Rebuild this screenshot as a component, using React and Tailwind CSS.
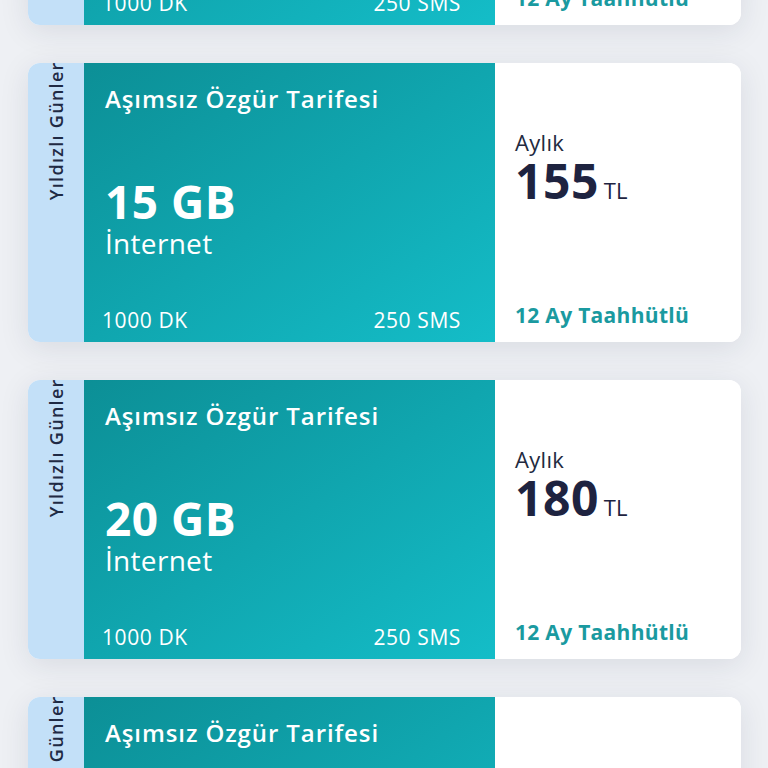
import React from "react";

const plans = [
  { gb: 10, price: 130 },
  { gb: 15, price: 155 },
  { gb: 20, price: 180 },
  { gb: 25, price: 205 },
];

const PlanCard = ({ gb, price }) => {
  return (
    <div className="flex h-[279px] rounded-[12px] overflow-hidden bg-white shadow-[0_6px_30px_rgba(30,40,70,0.10)]">
      {/* side tab */}
      <div className="w-[56px] shrink-0 bg-[#c3e0f8] flex flex-col items-center justify-end pb-[142px] overflow-hidden">
        <span className="[writing-mode:vertical-rl] rotate-180 whitespace-nowrap text-[18px] font-semibold tracking-[1.3px] text-[#1f2a44]">
          Yıldızlı Günleri
        </span>
      </div>

      {/* teal block */}
      <div className="w-[411px] shrink-0 flex flex-col bg-gradient-to-br from-[#0c8f96] to-[#14bdc8] text-white">
        <div className="pl-[21px] pt-[21px] text-[24px] leading-[30px] font-semibold tracking-[0.9px]">
          Aşımsız Özgür Tarifesi
        </div>
        <div className="pl-[21px] mt-[63px] text-[46px] leading-[48px] font-bold tracking-[0.5px]">
          {gb} GB
        </div>
        <div className="pl-[21px] mt-[3px] text-[28px] leading-[30px] font-medium tracking-[0.3px]">
          İnternet
        </div>
        <div className="mt-auto pl-[18px] pr-[34px] pb-[9px] flex justify-between text-[21px] leading-[26px] font-medium tracking-[0.6px]">
          <span>1000 DK</span>
          <span>250 SMS</span>
        </div>
      </div>

      {/* price block */}
      <div className="flex-1 flex flex-col pl-[20px] bg-white">
        <div className="mt-[66px] text-[22px] leading-[26px] tracking-[0.3px] text-[#222a40]">Aylık</div>
        <div className="flex items-baseline mt-[2px]">
          <span className="text-[48px] leading-[48px] font-bold text-[#1e2340] tracking-[0.5px]">{price}</span>
          <span className="ml-[5px] text-[22px] text-[#1e2340]">TL</span>
        </div>
        <div className="mt-auto pb-[14px] text-[21px] leading-[26px] font-bold tracking-[0.3px] text-[#1a9aa0]">
          12 Ay Taahhütlü
        </div>
      </div>
    </div>
  );
};

export default function App() {
  return (
    <div
      className="w-[768px] h-[768px] overflow-hidden bg-[#eef0f4]"
      style={{ fontFamily: "'Open Sans', Lato, sans-serif" }}
    >
      <div className="mt-[-254px] ml-[28px] w-[713px] flex flex-col gap-[38px]">
        {plans.map((p) => (
          <PlanCard key={p.gb} gb={p.gb} price={p.price} />
        ))}
      </div>
    </div>
  );
}
